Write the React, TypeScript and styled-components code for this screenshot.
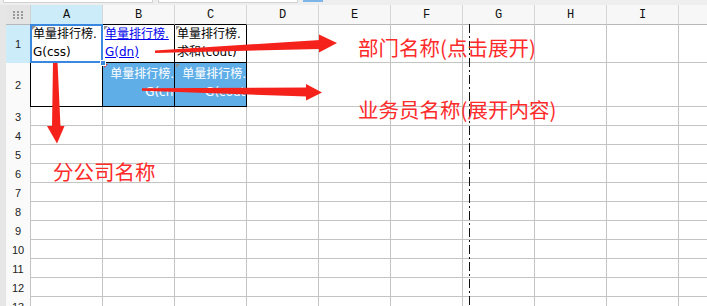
import * as React from 'react';
import styled, { createGlobalStyle } from 'styled-components';

const GlobalStyle = createGlobalStyle`
  * { box-sizing: border-box; }
  html, body { margin: 0; padding: 0; background: #ffffff; overflow: hidden; }
`;

const Page = styled.div`
  position: relative;
  width: 707px;
  height: 306px;
  overflow: hidden;
  background: #ffffff;
  font-family: 'DejaVu Sans', 'Noto Sans CJK SC', sans-serif;
`;

const Toolbar = styled.div`
  height: 5px;
  display: flex;
  gap: 5px;
  padding-left: 3px;
  background: #eeeeee;
  overflow: hidden;
`;

const ToolInput = styled.div<{ $w: number }>`
  width: ${(p) => p.$w}px;
  height: 3px;
  background: #ffffff;
  border: 1px solid #d2d2d2;
  border-top: none;
`;

const ToolTab = styled.div`
  width: 20px;
  height: 2px;
  background: #7db4ea;
`;

const Sheet = styled.div`
  display: flex;
`;

const Strip = styled.div`
  width: 6px;
  flex: none;
  background: #e6e6e6;
`;

const Grid = styled.div`
  display: grid;
  grid-template-columns: 25px repeat(10, 72px);
  grid-template-rows: 20px 38px 44px repeat(11, 19px);
`;

const Corner = styled.div`
  display: flex;
  align-items: center;
  justify-content: center;
  background: #e4e4e4;
  border-right: 1px solid #cfcfcf;
  border-bottom: 1px solid #b8b8b8;
`;

const ColHeader = styled.div<{ $active?: boolean; $edge?: boolean }>`
  display: flex;
  align-items: center;
  justify-content: center;
  background: ${(p) => (p.$active ? '#cdecfa' : '#f7f7f7')};
  border-right: 1px solid #d6d6d6;
  border-bottom: 1px solid ${(p) => (p.$edge ? '#000000' : '#b8b8b8')};
  font-family: 'Liberation Mono', monospace;
  font-size: 12px;
  color: #111111;
`;

const RowHeader = styled.div<{ $active?: boolean; $edge?: boolean }>`
  display: flex;
  align-items: center;
  justify-content: center;
  background: ${(p) => (p.$active ? '#cdecfa' : '#fafafa')};
  border-right: 1px solid ${(p) => (p.$edge ? '#000000' : '#c4c4c4')};
  font-family: 'Liberation Sans', sans-serif;
  font-size: 11px;
  color: #222222;
`;

const Cell = styled.div<{ $boxed?: boolean; $fill?: boolean; $selected?: boolean }>`
  position: relative;
  min-width: 0;
  z-index: ${(p) => (p.$selected ? 2 : 'auto')};
  background: ${(p) => (p.$fill ? '#60aee8' : '#ffffff')};
  border-right: 1px solid ${(p) => (p.$boxed ? '#000000' : '#c4c4c4')};
  border-bottom: 1px solid ${(p) => (p.$boxed ? '#000000' : '#c4c4c4')};

  &::after {
    content: '';
    display: ${(p) => (p.$selected ? 'block' : 'none')};
    position: absolute;
    top: -1px;
    left: -1px;
    right: -1px;
    bottom: -1px;
    border: 2px solid #3a87e0;
    pointer-events: none;
  }
`;

const Handle = styled.div`
  position: absolute;
  right: -4px;
  bottom: -4px;
  width: 6px;
  height: 6px;
  background: #3a87e0;
  border: 1px solid #ffffff;
  z-index: 3;
`;

const Mark = styled.div<{ $color: string }>`
  position: absolute;
  top: 1px;
  left: 1px;
  width: 0;
  height: 0;
  border-top: 4px solid ${(p) => p.$color};
  border-right: 4px solid transparent;
  z-index: 1;
`;

type Tone = 'plain' | 'link' | 'inverse';

const CellText = styled.div<{ $align: 'left' | 'right'; $tone: Tone; $top: number }>`
  height: 100%;
  overflow: hidden;
  padding: ${(p) => p.$top}px 0 0 ${(p) => (p.$align === 'left' ? 2 : 0)}px;
  text-align: ${(p) => p.$align};
  font-size: 12px;
  line-height: 18px;
  white-space: nowrap;
  color: ${(p) => (p.$tone === 'link' ? '#0000ee' : p.$tone === 'inverse' ? '#ffffff' : '#000000')};
  text-decoration: ${(p) => (p.$tone === 'link' ? 'underline' : 'none')};
`;

const Line = styled.div<{ $clip?: boolean }>`
  margin-right: ${(p) => (p.$clip ? '-4px' : '0')};
`;

const PageBreak = styled.div`
  position: absolute;
  left: 469px;
  top: 24px;
  bottom: 0;
  width: 1px;
  background: repeating-linear-gradient(
    to bottom,
    #111111 0 9px,
    transparent 9px 12px,
    #111111 12px 14px,
    transparent 14px 17px
  );
`;

const Overlay = styled.svg`
  position: absolute;
  left: 0;
  top: 0;
  pointer-events: none;
`;

const Note = styled.div<{ $x: number; $y: number }>`
  position: absolute;
  left: ${(p) => p.$x}px;
  top: ${(p) => p.$y}px;
  font-family: 'Noto Sans CJK SC', sans-serif;
  font-size: 20.5px;
  line-height: 24px;
  color: #ff2b2b;
  white-space: nowrap;
`;

interface CellSpec {
  lines: string[];
  tone: Tone;
  align: 'left' | 'right';
  mark?: string;
}

// last column is only partly in view, its letter falls outside
const cols = ['A', 'B', 'C', 'D', 'E', 'F', 'G', 'H', 'I', 'J'];
const rows = [1, 2, 3, 4, 5, 6, 7, 8, 9, 10, 11, 12, 13];
const boxedCols = ['A', 'B', 'C'];

const specs: Record<string, CellSpec> = {
  A1: { lines: ['单量排行榜.', 'G(css)'], tone: 'plain', align: 'left', mark: '#8f8f8f' },
  B1: { lines: ['单量排行榜.', 'G(dn)'], tone: 'link', align: 'left', mark: '#8f8f8f' },
  C1: { lines: ['单量排行榜.', '求和(cout)'], tone: 'plain', align: 'left', mark: '#8f8f8f' },
  B2: { lines: ['单量排行榜.', 'G(cn)'], tone: 'inverse', align: 'right', mark: '#e03030' },
  C2: { lines: ['单量排行榜.', 'G(cout)'], tone: 'inverse', align: 'right', mark: '#8f8f8f' },
};

const GridDots: React.FC = () => (
  <svg width="10" height="8" viewBox="0 0 10 8">
    {[0, 4, 8].map((x) =>
      [0, 3, 6].map((y) => <rect key={`${x}-${y}`} x={x} y={y} width="2" height="2" fill="#9a9a9a" />),
    )}
  </svg>
);

const Arrows: React.FC = () => (
  <Overlay width="707" height="306" viewBox="0 0 707 306">
    <g fill="#f5221b">
      <polygon points="155,50.5 320,40 320,49 155,53" />
      <polygon points="319,34.5 337,43 319,52.5" />
      <polygon points="142,88.3 307,87.5 307,96.5 142,90.7" />
      <polygon points="306,84 322,92.5 306,100.5" />
      <polygon points="53.5,29 56,29 60.5,127 52,127" />
      <polygon points="47,126 64.5,126 57,143.5" />
    </g>
  </Overlay>
);

const App: React.FC = () => {
  return (
    <Page>
      <GlobalStyle />
      <Toolbar>
        <ToolInput $w={150} />
        <ToolInput $w={140} />
        <ToolTab />
      </Toolbar>
      <Sheet>
        <Strip />
        <Grid>
          <Corner>
            <GridDots />
          </Corner>
          {cols.map((c) => (
            <ColHeader key={c} $active={c === 'A'} $edge={boxedCols.includes(c)}>
              {c === 'J' ? '' : c}
            </ColHeader>
          ))}
          {rows.map((r) => (
            <React.Fragment key={r}>
              <RowHeader $active={r === 1} $edge={r <= 2}>
                {r}
              </RowHeader>
              {cols.map((c) => {
                const id = `${c}${r}`;
                const spec = specs[id];
                const boxed = r <= 2 && boxedCols.includes(c);
                const selected = id === 'A1';
                return (
                  <Cell key={id} $boxed={boxed} $fill={spec?.tone === 'inverse'} $selected={selected}>
                    {spec?.mark && <Mark $color={spec.mark} />}
                    {spec && (
                      <CellText $align={spec.align} $tone={spec.tone} $top={r === 2 ? 2 : 0}>
                        {spec.lines.map((line, i) => (
                          <Line key={i} $clip={spec.align === 'right' && i === 1}>
                            {line}
                          </Line>
                        ))}
                      </CellText>
                    )}
                    {selected && <Handle />}
                  </Cell>
                );
              })}
            </React.Fragment>
          ))}
        </Grid>
      </Sheet>
      <PageBreak />
      <Arrows />
      <Note $x={358} $y={35}>部门名称(点击展开)</Note>
      <Note $x={358} $y={97}>业务员名称(展开内容)</Note>
      <Note $x={53} $y={159}>分公司名称</Note>
    </Page>
  );
};

export default App;
